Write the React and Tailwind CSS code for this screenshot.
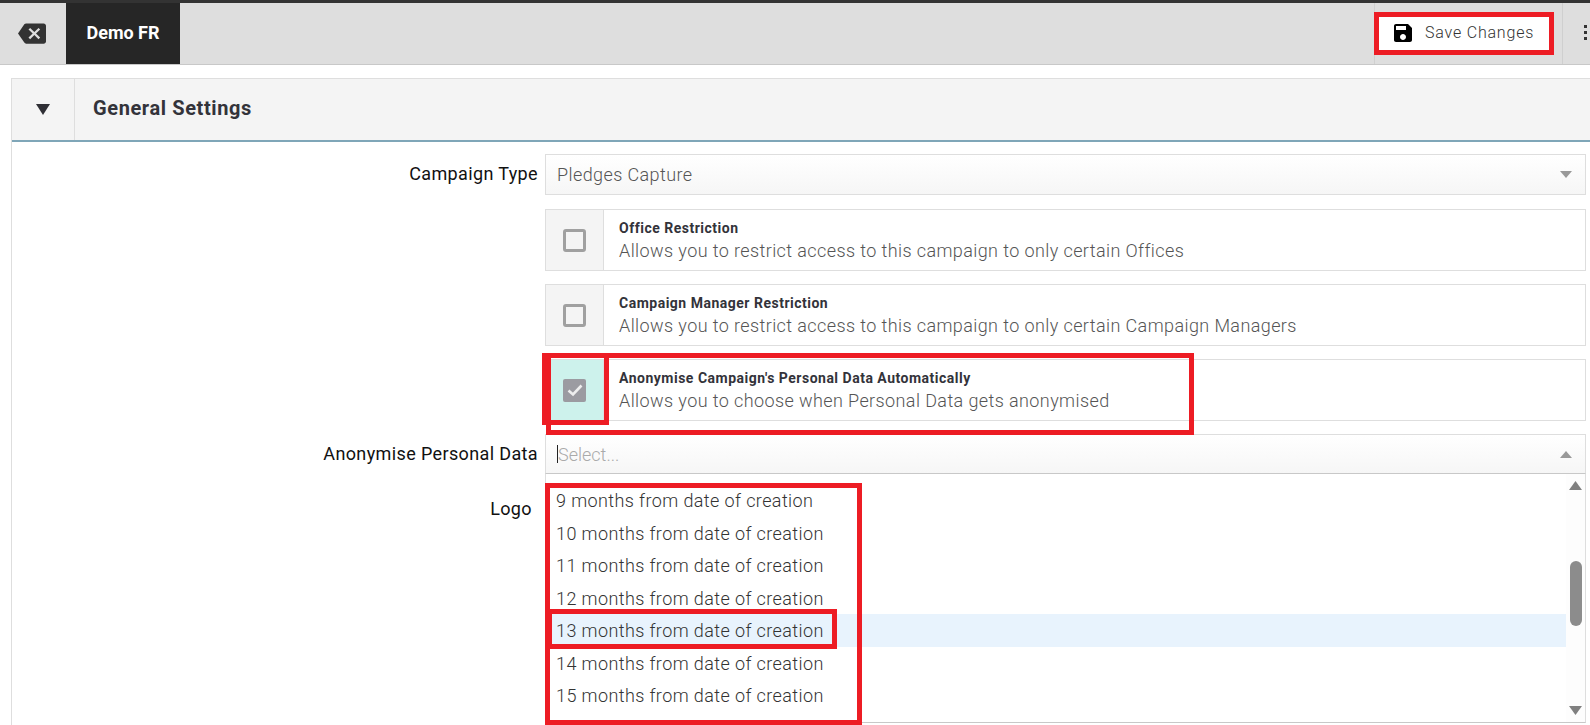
const options = [
    '9 months from date of creation',
    '10 months from date of creation',
    '11 months from date of creation',
    '12 months from date of creation',
    '13 months from date of creation',
    '14 months from date of creation',
    '15 months from date of creation',
];

const CheckRow = ({ title, text, checked }) => (
    <div className="flex h-[62px] border border-[#dedede] mb-[13px]">
        <div className={`w-[58px] shrink-0 flex items-center justify-center border-r border-[#dedede] ${checked ? 'bg-[#cdf2ec]' : 'bg-[#f4f4f4]'}`}>
            {checked ? (
                <div className="w-[23px] h-[23px] rounded-[2px] bg-[#9b9ba1] flex items-center justify-center">
                    <svg width="16" height="13" viewBox="0 0 16 13" fill="none">
                        <path d="M1.5 6.5L6 10.5L14.5 1.5" stroke="#eeeeee" strokeWidth="2.6" />
                    </svg>
                </div>
            ) : (
                <div className="w-[23px] h-[23px] rounded-[3px] border-[3px] border-[#a0a0a0] bg-[#f4f4f4]"></div>
            )}
        </div>
        <div className="pl-[15px] pt-[8px]">
            <div className="text-[14px] leading-[21px] font-bold text-[#33333a] tracking-[0.5px]">{title}</div>
            <div className="text-[18px] leading-[24px] font-light text-[#555] tracking-[0.4px]">{text}</div>
        </div>
    </div>
);

const App = () => {
    return (
        <div className="relative w-[1590px] h-[725px] overflow-hidden bg-white font-['Roboto',sans-serif]">
            {/* Top bar */}
            <div className="h-[3px] bg-[#333]"></div>
            <div className="flex h-[62px] bg-[#dedede] border-b border-[#c8c8c8]">
                <div className="w-[66px] flex items-center justify-center pr-[2px]">
                    <svg width="28" height="27" viewBox="0 0 24 24" preserveAspectRatio="none" fill="#333">
                        <path d="M22 3H7c-.69 0-1.23.35-1.59.88L0 12l5.41 8.11c.36.53.9.89 1.59.89h15c1.1 0 2-.9 2-2V5c0-1.1-.9-2-2-2zm-3 12.59L17.59 17 14 13.41 10.41 17 9 15.59 12.59 12 9 8.41 10.41 7 14 10.59 17.59 7 19 8.41 15.41 12 19 15.59z" />
                    </svg>
                </div>
                <div className="w-[114px] bg-[#262626] text-white font-bold text-[18px] flex items-center justify-center pb-[3px]">Demo FR</div>
                <div className="flex-1"></div>
                <div className="w-[188px] border-l border-[#d0d0d0] pt-[9px]">
                    <div className="w-[180px] h-[43px] -ml-[1px] border-[5px] border-[#ed1c24] bg-white flex items-center pl-[12px] pb-[2px] gap-[10px]">
                        <svg width="24" height="24" viewBox="0 0 24 24" fill="black">
                            <path d="M17 3H5c-1.11 0-2 .9-2 2v14c0 1.1.89 2 2 2h14c1.1 0 2-.9 2-2V7l-4-4zm-5 16c-1.66 0-3-1.34-3-3s1.34-3 3-3 3 1.34 3 3-1.34 3-3 3zm3-10H5V5h10v4z" />
                        </svg>
                        <span className="text-[16px] font-light text-[#333] tracking-[0.8px] whitespace-nowrap">Save Changes</span>
                    </div>
                </div>
                <div className="w-[28px] border-l border-[#cfcfcf] flex flex-col gap-[3px] pt-[22px] pl-[21px]">
                    <div className="w-[3px] h-[3px] bg-[#333]"></div>
                    <div className="w-[3px] h-[3px] bg-[#333]"></div>
                    <div className="w-[3px] h-[3px] bg-[#333]"></div>
                </div>
            </div>

            {/* Panel */}
            <div className="ml-[11px] mt-[13px] h-[660px] border-l border-[#dedede]">
                <div className="flex h-[64px] bg-[#f4f4f4] border-t border-[#dedede] border-b-2 border-b-[#7fa6b8]">
                    <div className="w-[63px] flex items-center justify-center border-r border-[#dedede]">
                        <svg width="14" height="11" viewBox="0 0 14 11" fill="#2f2f35"><path d="M0 0H14L7 11Z" /></svg>
                    </div>
                    <div className="pl-[18px] pb-[4px] flex items-center text-[20px] font-bold text-[#33333a] tracking-[0.6px]">General Settings</div>
                </div>

                <div className="relative pl-[533px] pr-[4px] pt-[12px]">
                    <div className="flex items-center h-[41px] border border-[#dedede] bg-gradient-to-b from-white to-[#f6f6f6] mb-[14px] relative">
                        <div className="absolute right-full mr-[8px] pb-[2px] whitespace-nowrap text-[18px] text-[#111] tracking-[0.37px]">Campaign Type</div>
                        <span className="pl-[11px] text-[18px] font-light text-[#555] tracking-[0.4px]">Pledges Capture</span>
                        <svg className="ml-auto mr-[13px]" width="12" height="7" viewBox="0 0 12 7" fill="#999"><path d="M0 0H12L6 7Z" /></svg>
                    </div>

                    <CheckRow title="Office Restriction" text="Allows you to restrict access to this campaign to only certain Offices" />
                    <CheckRow title="Campaign Manager Restriction" text="Allows you to restrict access to this campaign to only certain Campaign Managers" />
                    <CheckRow checked title="Anonymise Campaign's Personal Data Automatically" text="Allows you to choose when Personal Data gets anonymised" />

                    <div className="flex items-center h-[40px] border border-[#dedede] border-b-[#c8c8c8] bg-gradient-to-b from-white to-[#f6f6f6] relative">
                        <div className="absolute right-full mr-[8px] pb-[2px] whitespace-nowrap text-[18px] text-[#111] tracking-[0.37px]">Anonymise Personal Data</div>
                        <span className="ml-[11px] w-[1px] h-[18px] bg-[#222]"></span>
                        <span className="text-[18px] font-light text-[#aaa]">Select...</span>
                        <svg className="ml-auto mr-[13px]" width="12" height="7" viewBox="0 0 12 7" fill="#999"><path d="M0 7H12L6 0Z" /></svg>

                        {/* Open dropdown list */}
                        <div className="absolute left-[-1px] right-[-1px] top-[39px] h-[249px] bg-white border border-t-0 border-[#dedede] border-b-[#c8c8c8] pt-[10px] flex z-10">
                            <div className="flex-1">
                                {options.map((opt, i) => (
                                    <div key={opt} className={`h-[32.5px] leading-[34px] pl-[10px] text-[18px] font-light text-[#333] tracking-[0.4px] ${i === 4 ? 'bg-[#e8f3fd]' : ''}`}>
                                        {opt}
                                    </div>
                                ))}
                            </div>
                            <div className="w-[19px] -mt-[10px] relative flex flex-col items-center justify-between py-[7px] bg-[#fdfdfd]">
                                <svg width="13" height="9" viewBox="0 0 13 9" fill="#808080"><path d="M0 9H13L6.5 0Z" /></svg>
                                <div className="absolute top-[87px] w-[12px] h-[65px] rounded-[6px] bg-[#8c8c8c]"></div>
                                <svg width="13" height="9" viewBox="0 0 13 9" fill="#808080"><path d="M0 0H13L6.5 9Z" /></svg>
                            </div>
                        </div>
                    </div>

                    <div className="mt-[21px] text-right pr-[1058px] text-[18px] text-[#111] tracking-[0.37px] -ml-[533px] -mr-[4px]">Logo</div>
                </div>
            </div>

            {/* Red annotation boxes */}
            <div className="absolute left-[546px] top-[353px] w-[648px] h-[82px] border-[5px] border-[#ed1c24] z-20"></div>
            <div className="absolute left-[542px] top-[353px] w-[67px] h-[72px] border-[5px] border-[#ed1c24] z-20"></div>
            <div className="absolute left-[545px] top-[483px] w-[317px] h-[242px] border-[5px] border-[#ed1c24] z-20"></div>
            <div className="absolute left-[547px] top-[609px] w-[290px] h-[40px] border-[5px] border-[#ed1c24] z-20"></div>
        </div>
    );
};

export default App;
